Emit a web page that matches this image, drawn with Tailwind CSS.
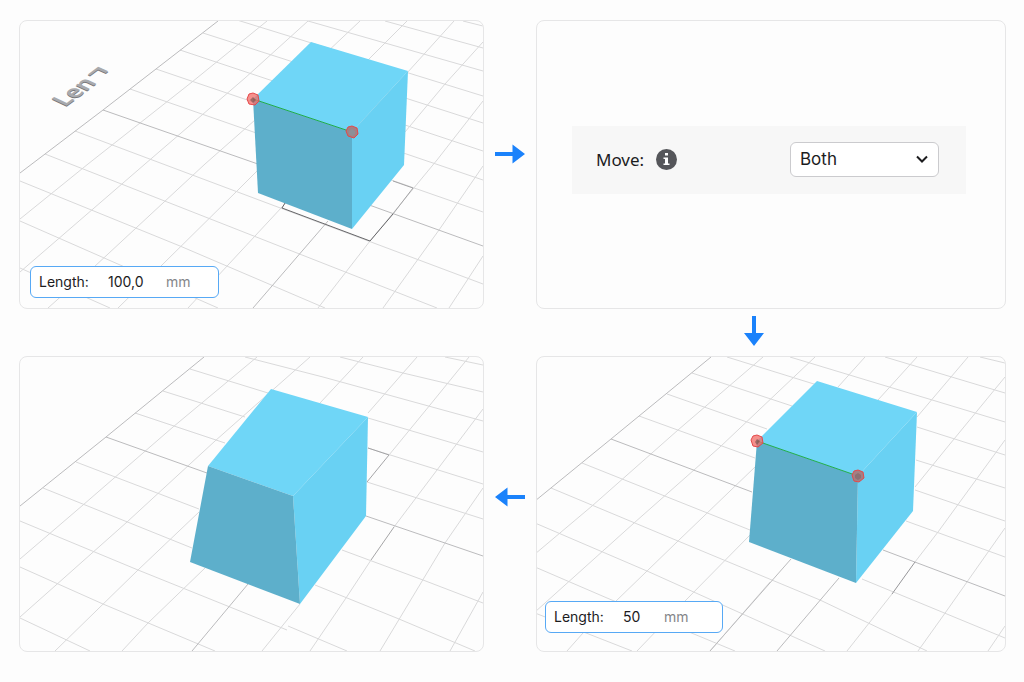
<!DOCTYPE html>
<html lang="en">

<head>
  <meta charset="UTF-8" />
  <meta name="viewport" content="width=device-width, initial-scale=1.0" />
  <title>Edit Edge Length</title>
  <script src="https://cdn.jsdelivr.net/npm/@tailwindcss/browser@4"></script>
</head>

<body class="bg-[#fdfdfd] min-h-screen pl-[19px] pr-[18px] pt-5 pb-7 font-['Inter',sans-serif] text-[#1c1c1e]">

  <main class="grid grid-cols-[465fr_52fr_470fr]">

    <!-- Step 1: select the edge -->
    <section class="relative overflow-hidden border border-[#e6e6e7] rounded-lg">
      <svg class="block w-full h-auto" viewBox="20 21 463 287" fill="none">
        <!-- Grid -->
        <g stroke="#d9d9da">
          <path d="M463 21L483 26M385 21L483 48M308 21L483 71M237 20L483 96M203 33L483 123M180 50L483 151M156 69L483 180M130 89L483 212M75 131L483 284M45 154L437 308M20 181L180 246L325 308M20 221L218 308M20 268L110 308" />
          <path d="M267 21L192 82L88 164L20 219M308 21L245 78L145 164L20 272M360 21L255 120L205 164L94 267L48 308M407 21L238 190L161 266L118 308M454 21L407 73L282 207L188 308M483 42L445 84L405 132M483 101L437 160L370 241L318 308M483 166L439 230L383 308M483 256L449 308" />
        </g>
        <path d="M218 21L103 110L20 173M103 110L255 163L372 206L483 246M328 221L253 308" stroke="#bbbbbd" />
        <path d="M393 181L413 188L393 214" stroke="#a5a5a7" />
        <path d="M393 214L370 241L282 208L285 203" stroke="#666669" />
        <!-- Workplane label -->
        <g font-family="Noto Sans, Noto Sans CJK KR, sans-serif" font-size="23" font-weight="600">
          <text transform="matrix(.8 -.6 .91 .42 65 108)" fill="#77787b">Len<tspan font-size="22" font-weight="700">ㄱ</tspan></text>
          <text transform="matrix(.8 -.6 .91 .42 65 107)" fill="#a9aaad">Len<tspan font-size="22" font-weight="700">ㄱ</tspan></text>
        </g>
        <!-- Cube -->
        <path d="M311 42L408 71L352 132L253 99Z" fill="#6fd6f7" />
        <path d="M408 71L404 165L352 229V132Z" fill="#69d1f3" />
        <path d="M253 99L352 132V229L258 193Z" fill="#5dafcb" />
        <path d="M253 99L352 132" stroke="#1fae4b" />
        <g stroke="#e5484a">
          <path d="M253 93L258 95L259 101L255 105L249 104L247 99L249 94Z" fill="#f26b66" fill-opacity=".75" />
          <path d="M352 126L357 128L358 134L354 138L348 136L346 131L348 127Z" fill="#a57f83" />
        </g>
        <path d="M253 97L256 100L253 103L250 100Z" fill="#7d5552" fill-opacity=".7" />
        <path d="M352 129L355 131V134L352 136L349 134V131Z" fill="#8d8f98" />
      </svg>
      <div class="absolute left-2.5 bottom-2.5 flex items-center h-8 w-[189px] pl-2 bg-white border border-[#57a9f5] rounded-md text-sm">
        <label for="lengthBefore" class="w-[69px]">Length:</label>
        <input id="lengthBefore" type="text" value="100,0" class="w-[58px] outline-none" />
        <span class="text-[#85868a]">mm</span>
      </div>
    </section>

    <div class="flex items-center justify-center pb-[22px]">
      <svg class="w-[31px] h-5" viewBox="0 0 31 20" fill="#1b82fb">
        <path d="M0 8H17.500V0.500L30 10L17.500 19.500V12H0Z" />
      </svg>
    </div>

    <!-- Step 2: move option -->
    <section class="flex items-center border border-[#e6e6e7] rounded-lg pl-[35px] pr-[39px] pb-2.5">
      <div class="flex-1 flex items-center h-[68px] pl-6 pr-[27px] bg-[#f7f7f7]">
        <label for="moveMode" class="font-['Noto_Sans',sans-serif] text-[17px]">Move:</label>
        <svg class="ml-3 w-[21px] h-[21px]" viewBox="0 0 21 21">
          <circle cx="10.5" cy="10.5" r="10.5" fill="#55565a" />
          <path d="M9 4H12V6.500H9ZM7.500 8.500H12V14.500H13.500V16H7.500V14.500H9V10H7.500Z" fill="#fff" />
        </svg>
        <div class="relative ml-auto w-[149px]">
          <select id="moveMode" class="appearance-none block w-full h-[35px] pl-[9px] bg-white border border-[#cbcbce] rounded-md text-[17px]">
            <option>Both</option>
            <option>Start</option>
            <option>End</option>
          </select>
          <svg class="absolute right-[11px] top-[13px] w-3 h-2 pointer-events-none" viewBox="0 0 12 8" fill="none">
            <path d="M1 1.500L6 6.500L11 1.500" stroke="#1c1c1e" stroke-width="2" />
          </svg>
        </div>
      </div>
    </section>

    <div class="col-start-3 flex items-center justify-center h-[47px] pr-[34px] pb-3">
      <svg class="w-5 h-[31px] mt-2" viewBox="0 0 20 31" fill="#1b82fb">
        <path d="M8 1H12V18H20L10 31L0 18H8Z" />
      </svg>
    </div>

    <!-- Step 4: result -->
    <section class="overflow-hidden border border-[#e6e6e7] rounded-lg row-start-3">
      <svg class="block w-full h-auto" viewBox="20 357 463 294" fill="none">
        <!-- Grid -->
        <g stroke="#d9d9da">
          <path d="M445 357L483 365M340 357L403 373L483 392M245 357L323 377L483 421M190 369L268 393M368 418L483 452M163 391L245 417M368 448L483 484M135 413L225 443M367 482L483 519M76 462L199 509M342 550L423 580L483 603M43 488L192 548M315 585L399 619L475 651M20 521L138 570L287 630M288 626L347 651M20 567L103 604L215 651M20 618L90 651" />
          <path d="M257 357L173 427L83 505L20 559M310 357L215 441L127 522L20 617M363 357L320 403M199 512L138 570L55 651M417 357L368 413M205 568L148 623L122 651M469 357L430 405L389 455M300 604L262 651M483 409L437 470L394 527M371 560L346 598L310 651M483 488L445 543L380 651M483 592L450 651" />
        </g>
        <path d="M204 357L106 437L20 506M106 437L207 473M366 516L483 556M248 584L192 651" stroke="#bbbbbd" />
        <path d="M368 448L389 455L367 482M394 527L371 560" stroke="#a5a5a7" />
        <!-- Deformed cube -->
        <path d="M271 389L368 417L293 496L208 466Z" fill="#6fd6f7" />
        <path d="M368 417L366 516L300 604L293 496Z" fill="#69d1f3" />
        <path d="M208 466L293 496L300 604L190 562Z" fill="#5dafcb" />
      </svg>
    </section>

    <div class="flex items-center justify-center row-start-3 pb-[14px]">
      <svg class="w-[31px] h-5" viewBox="0 0 31 20" fill="#1b82fb">
        <path d="M30 8H12.500V0.500L0 10L12.500 19.500V12H30Z" />
      </svg>
    </div>

    <!-- Step 3: enter the new length -->
    <section class="relative overflow-hidden border border-[#e6e6e7] rounded-lg row-start-3">
      <svg class="block w-full h-auto" viewBox="537 357 468 294" fill="none">
        <!-- Grid -->
        <g stroke="#d9d9da">
          <path d="M980 357L1005 363M885 357L1005 393M790 357L1005 422M727 357L830 389M917 427L1005 455M692 373L792 406M916 460L1005 488M667 394L767 429M915 490L1005 521M639 416L755 458M906 521L1005 557M582 463L750 530M862 579L1005 638M551 488L678 541L820 600L927 651M535 523L647 571L825 651M535 567L607 598L735 651M535 613L632 651" />
          <path d="M763 357L678 430L592 506L535 554M815 357L720 447L634 523L535 612M865 357L838 387M755 467L678 541L583 633L567 651M917 357L878 400M750 535L686 600L637 651M968 357L917 417M770 582L710 651M1005 377L945 450L915 487M1005 440L938 532L915 562M892 594L847 651M1005 528L943 616L918 651M1005 626L988 651" />
        </g>
        <path d="M711 357L611 439L535 501M611 439L752 492M883 550L1005 596M791 559L710 651M839 578L777 651" stroke="#bbbbbd" />
        <path d="M915 562L892 594" stroke="#97979a" />
        <!-- Cube -->
        <path d="M817 381L917 412L858 476L757 441Z" fill="#6fd6f7" />
        <path d="M917 412L913 511L856 583L858 476Z" fill="#69d1f3" />
        <path d="M757 441L858 476L856 583L749 542Z" fill="#5dafcb" />
        <path d="M757 441L858 476" stroke="#1fae4b" />
        <g stroke="#e5484a">
          <path d="M757 435L762 437L763 443L758 447L753 446L751 440L753 436Z" fill="#f26b66" fill-opacity=".75" />
          <path d="M858 470L863 472L864 478L859 482L854 481L852 475L854 471Z" fill="#a57f83" />
        </g>
        <path d="M757 439L760 441L757 445L755 442Z" fill="#7d5552" fill-opacity=".7" />
        <path d="M858 473L861 475V478L858 480L855 478V475Z" fill="#8d7073" />
      </svg>
      <div class="absolute left-2 bottom-[18px] flex items-center h-8 w-[178px] pl-2 bg-white border border-[#57a9f5] rounded-md text-sm">
        <label for="lengthAfter" class="w-[69px]">Length:</label>
        <input id="lengthAfter" type="text" value="50" class="w-[41px] outline-none" />
        <span class="text-[#85868a]">mm</span>
      </div>
    </section>

  </main>
</body>
</html>
